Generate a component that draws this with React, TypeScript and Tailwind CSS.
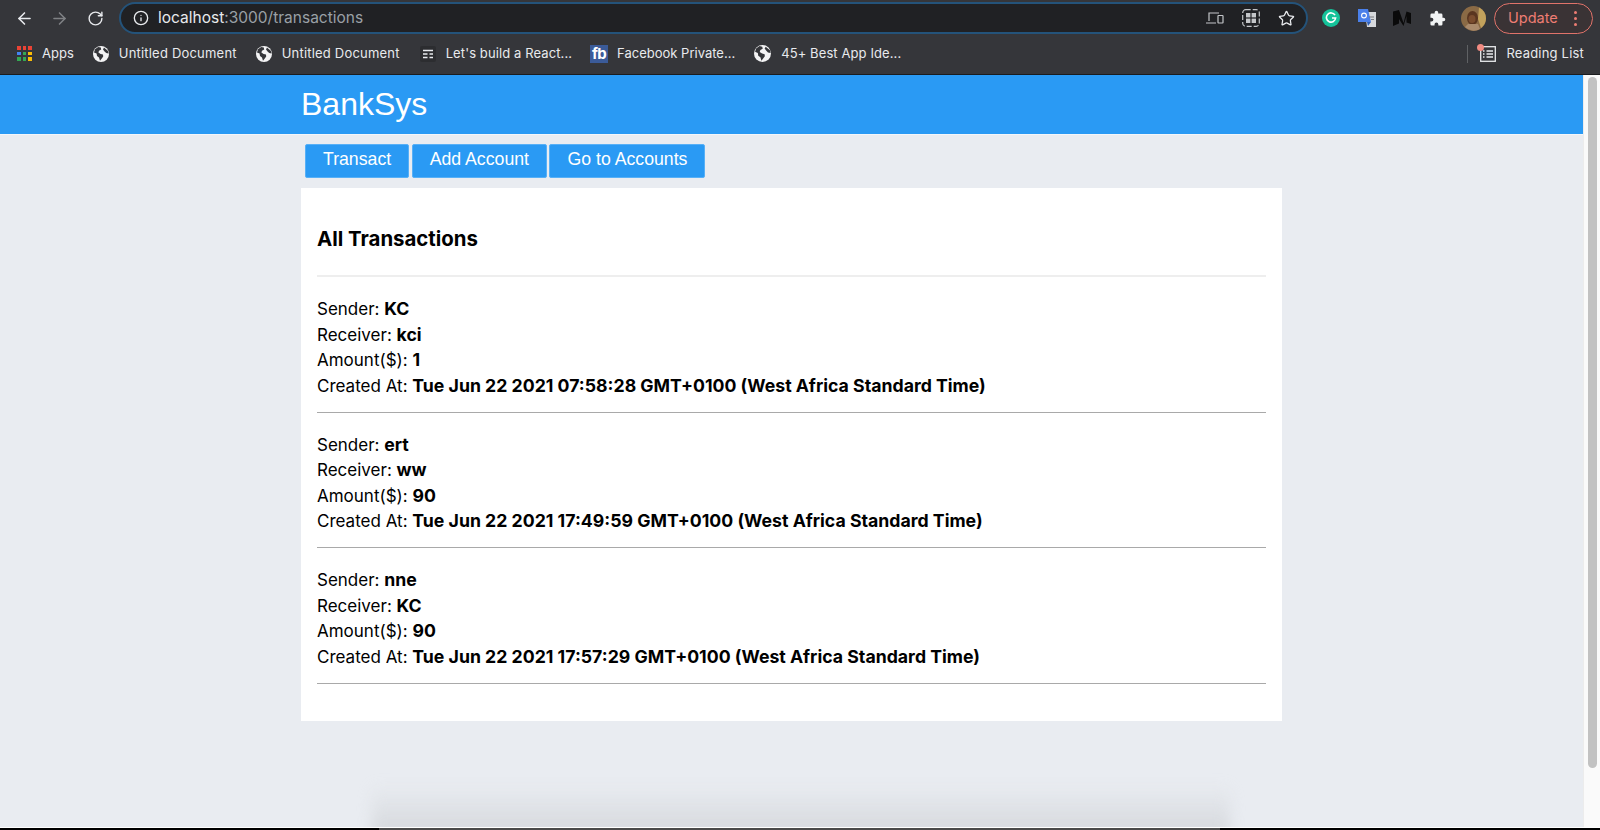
import { ArrowLeft, ArrowRight, Info, RotateCw, Star } from "lucide-react";

const transactions = [
	{ sender: "KC", receiver: "kci", amount: "1", createdAt: "Tue Jun 22 2021 07:58:28 GMT+0100 (West Africa Standard Time)" },
	{ sender: "ert", receiver: "ww", amount: "90", createdAt: "Tue Jun 22 2021 17:49:59 GMT+0100 (West Africa Standard Time)" },
	{ sender: "nne", receiver: "KC", amount: "90", createdAt: "Tue Jun 22 2021 17:57:29 GMT+0100 (West Africa Standard Time)" },
];

function GlobeIcon({ className }: { className: string }) {
	return (
		<svg viewBox="0 0 16 16" className={className}>
			<circle cx="8" cy="8" r="8" fill="#f4f4f5" />
			<path d="M2 3.2 5.2 1l2.6.6.4 2-2.2 1.2-.6 1.8 2.2 1.4 2.4.6.2 2-1.6 2.2-1.6 2-1-3.2-2-1.6-.4-2.4L1 6.4Z" fill="#35363a" />
			<path d="M11 1.6 15 5l.6 2.6-2.4-.6-1.6-1.6L10 3.4Z" fill="#35363a" />
		</svg>
	);
}

function AppsIcon() {
	const colors = ["#ea4335", "#ea4335", "#ea4335", "#4285f4", "#34a853", "#fbbc05", "#34a853", "#34a853", "#fbbc05"];
	return (
		<div className="grid h-[15px] w-[15px] grid-cols-3 gap-[2px]">
			{colors.map((c, i) => (
				<span key={i} className="block" style={{ backgroundColor: c }} />
			))}
		</div>
	);
}

function Bookmark({ icon, label, className, labelClassName }: { icon: React.ReactNode; label: string; className: string; labelClassName: string }) {
	return (
		<div className={`flex items-center ${className}`}>
			{icon}
			<span className={`whitespace-nowrap text-[13px] text-[#e8eaed] ${labelClassName}`}>{label}</span>
		</div>
	);
}

function BrowserChrome() {
	return (
		<div className="h-[75px] shrink-0 border-b border-[#1b1c1e] bg-[#35363a] font-['Inter',sans-serif]">
			{/* Toolbar */}
			<div className="flex h-[36px] items-center">
				<ArrowLeft className="ml-[15px] h-[19px] w-[19px] text-[#e8eaed]" strokeWidth={2} />
				<ArrowRight className="ml-[16px] h-[19px] w-[19px] text-[#7f8184]" strokeWidth={2} />
				<RotateCw className="ml-[18px] h-[17px] w-[17px] text-[#e8eaed]" strokeWidth={2} />
				<div className="ml-[15px] flex h-[32px] w-[1189px] items-center rounded-full border-2 border-[#24537a] bg-[#202124]">
					<Info className="ml-[12px] h-[16px] w-[16px] text-[#e8eaed]" strokeWidth={2} />
					<span className="ml-[9px] text-[15.500px] text-[#e8eaed]">
						localhost<span className="text-[#9aa0a6]">:3000/transactions</span>
					</span>
					<div className="ml-auto flex items-center">
						<svg viewBox="0 0 18 14" className="h-[14px] w-[18px]" fill="none" stroke="#c4c6c9" strokeWidth="1.2">
							<path d="M3 10V2h10M0 12h10" />
							<rect x="12" y="4.5" width="5" height="7.5" rx=".5" />
						</svg>
						<svg viewBox="0 0 18 18" className="ml-[18px] h-[18px] w-[18px]">
							<rect x=".7" y=".7" width="16.6" height="16.6" rx="3" fill="none" stroke="#c4c6c9" strokeWidth="1.2" strokeDasharray="5 2" />
							<rect x="4" y="4" width="4.4" height="4.4" fill="#c4c6c9" />
							<rect x="9.6" y="4" width="4.4" height="4.4" fill="#c4c6c9" />
							<rect x="4" y="9.6" width="4.4" height="4.4" fill="#c4c6c9" />
							<rect x="9.6" y="9.6" width="4.4" height="4.4" fill="#c4c6c9" />
						</svg>
						<Star className="mr-[11px] ml-[18px] h-[17px] w-[17px] text-[#e8eaed]" strokeWidth={1.8} />
					</div>
				</div>
				{/* Extensions */}
				<div className="ml-[14px] flex h-[18px] w-[18px] items-center justify-center rounded-full bg-[#15c39a]">
					<svg viewBox="0 0 12 12" className="h-[12px] w-[12px]" fill="none" stroke="#fff" strokeWidth="1.6">
						<path d="M10 3.2A4.6 4.6 0 1 0 10.6 6H7" />
					</svg>
				</div>
				<svg viewBox="0 0 18 18" className="ml-[18px] h-[18px] w-[18px]">
					<path d="M7 3h11v15H9Z" fill="#d7d9dc" />
					<path d="M0 0h10l3 13H0Z" fill="#4a80ea" />
					<path d="M9 13h4l-3 4Z" fill="#2f5fb5" />
					<circle cx="6" cy="6.5" r="2.4" fill="none" stroke="#fff" strokeWidth="1.1" />
					<path d="M11 8h5M13 10.5h3" stroke="#7b7d80" strokeWidth="1.2" />
				</svg>
				<svg viewBox="0 0 18 16" className="ml-[17px] h-[16px] w-[18px]" fill="#0a0a0a">
					<path d="M0 1.5 6 0v13.5L0 16Z" />
					<path d="M6 0l4.5 13 3-11.5 4.5 1.5V14l-4.500-1.500V6L10.500 16 6 9Z" />
				</svg>
				<svg viewBox="0 0 24 24" className="ml-[18px] h-[17px] w-[17px]" fill="#f1f3f4">
					<path d="M20.500 11H19V7a2 2 0 0 0-2-2h-4V3.500a2.500 2.500 0 0 0-5 0V5H4a2 2 0 0 0-2 2v3.800h1.500a2.700 2.700 0 0 1 0 5.400H2V20a2 2 0 0 0 2 2h3.800v-1.500a2.700 2.700 0 0 1 5.400 0V22H17a2 2 0 0 0 2-2v-4h1.500a2.500 2.500 0 0 0 0-5Z" />
				</svg>
				<svg viewBox="0 0 25 25" className="ml-[15px] h-[25px] w-[25px]">
					<circle cx="12.500" cy="12.500" r="12.500" fill="#8a6a45" />
					<path d="M18 1.500A12.500 12.500 0 0 1 25 12.500 12.500 12.500 0 0 1 20 22l-3-9Z" fill="#c2a25c" />
					<ellipse cx="11.500" cy="12" rx="5.500" ry="7" fill="#5a3620" />
					<ellipse cx="11" cy="13" rx="3.500" ry="4" fill="#7a4d2f" />
					<path d="M4 21a12.500 12.500 0 0 0 15 2l-2-5H7Z" fill="#a98a6c" />
				</svg>
				<div className="ml-[8px] flex h-[31px] w-[99px] items-center rounded-full border border-[#e0736a] bg-[#3a3335]">
					<span className="ml-[13px] text-[14.5px] text-[#ee7d73]">Update</span>
					<span className="ml-[16px] flex flex-col gap-[3px]">
						<span className="h-[3px] w-[3px] rounded-full bg-[#ee7d73]" />
						<span className="h-[3px] w-[3px] rounded-full bg-[#ee7d73]" />
						<span className="h-[3px] w-[3px] rounded-full bg-[#ee7d73]" />
					</span>
				</div>
			</div>

			{/* Bookmarks bar */}
			<div className="flex h-[38px] items-center pb-[3px]">
				<div className="ml-[17px] flex items-center">
					<AppsIcon />
					<span className="ml-[10px] text-[13px] text-[#e8eaed]">Apps</span>
				</div>
				<Bookmark className="ml-[19px]" labelClassName="ml-[10px] tracking-[0.2px]" icon={<GlobeIcon className="h-[16px] w-[16px]" />} label="Untitled Document" />
				<Bookmark className="ml-[19px]" labelClassName="ml-[10px] tracking-[0.2px]" icon={<GlobeIcon className="h-[16px] w-[16px]" />} label="Untitled Document" />
				<Bookmark
					className="ml-[20px]"
					labelClassName="ml-[10px] tracking-[0.1px]"
					icon={
						<span className="flex h-[16px] w-[16px] items-center justify-center rounded-[2px] bg-[#2c2d30]">
							<svg viewBox="0 0 16 16" className="h-[16px] w-[16px]" stroke="#e8eaed" strokeWidth="1.500">
								<path d="M3 4.500h10M3 8h4.500M9.500 8H13M3 11.500h4.500M9.500 11.500H13" />
							</svg>
						</span>
					}
					label="Let's build a React..."
				/>
				<Bookmark
					className="ml-[18px]"
					labelClassName="ml-[9px]"
					icon={
						<div className="flex h-[18px] w-[18px] items-center justify-center bg-[#3b5b99] text-[15px] leading-none font-bold tracking-[-0.5px] text-white">
							fb
						</div>
					}
					label="Facebook Private..."
				/>
				<Bookmark className="ml-[19px]" labelClassName="ml-[10px] tracking-[0.1px]" icon={<GlobeIcon className="h-[17px] w-[17px]" />} label="45+ Best App Ide..." />
				<div className="ml-auto flex items-center">
					<div className="h-[18px] w-px bg-[#5f6164]" />
					<div className="relative ml-[12px]">
						<svg viewBox="0 0 16 16" className="h-[16px] w-[16px]" fill="none" stroke="#e8eaed" strokeWidth="1.300">
							<rect x=".7" y=".7" width="14.600" height="14.600" />
							<path d="M3 5h1.500M6.500 5H13M3 8h1.500M6.500 8H13M3 11h1.500M6.500 11H13" />
						</svg>
						<span className="absolute -top-[2px] -left-[3px] h-[7px] w-[7px] rounded-full bg-[#f28b82]" />
					</div>
					<span className="mr-[16px] ml-[10px] text-[13px] tracking-[0.2px] text-[#e8eaed]">Reading List</span>
				</div>
			</div>
		</div>
	);
}

function TransactionRow({ label, value }: { label: string; value: string }) {
	return (
		<div>
			{label}: <b className="text-[17.700px] leading-none font-bold">{value}</b>
		</div>
	);
}

export default function App() {
	const buttons = ["Transact", "Add Account", "Go to Accounts"];

	return (
		<div className="relative flex h-[830px] w-[1600px] flex-col overflow-hidden bg-[#e9ecf1]">
			<BrowserChrome />

			<div className="flex min-h-0 flex-1">
				<main className="min-w-0 flex-1">
					<header className="h-[60px] border-b border-[#f3f6fa] bg-[#2a9af4]">
						<div className="mx-auto w-[981px] font-['Liberation_Sans',sans-serif] text-[32px] leading-[58px] text-white">BankSys</div>
					</header>

					<div className="mx-auto w-[981px]">
						<nav className="flex gap-[2.500px] pt-[9px] pl-[4px] font-['Liberation_Sans',sans-serif]">
							{buttons.map((b) => (
								<button key={b} className="h-[34px] rounded-[2px] border border-[#57b0f7] bg-[#2a9af4] px-[17px] pb-[3px] text-[17.700px] text-white">
									{b}
								</button>
							))}
						</nav>

						<section className="mt-[10px] h-[533px] bg-white px-4 font-['Inter',sans-serif] text-black">
							<h2 className="border-b-2 border-[#eeeeee] pt-[38px] pb-[23px] text-[20.400px] leading-[26px] font-bold">All Transactions</h2>
							<div className="text-[17px] leading-[25.500px]">
								{transactions.map((t) => (
									<div key={t.createdAt} className="border-b border-[#a9a9a9] pt-[20px] pb-[12.500px]">
										<TransactionRow label="Sender" value={t.sender} />
										<TransactionRow label="Receiver" value={t.receiver} />
										<TransactionRow label="Amount($)" value={t.amount} />
										<TransactionRow label="Created At" value={t.createdAt} />
									</div>
								))}
							</div>
						</section>
					</div>
				</main>

				{/* Scrollbar */}
				<div className="w-[17px] border-l border-[#ececec] bg-[#fafafa] pt-[2px] pl-[4px]">
					<div className="h-[691px] w-[9px] rounded-full bg-[#c2c2c2]" />
				</div>
			</div>

			{/* Window shadow from the screenshot's bottom edge */}
			<div className="absolute right-[370px] bottom-[-6px] left-[372px] h-[52px] bg-gradient-to-b from-transparent to-[#d4d7db] blur-[7px]" />
			<div className="absolute right-0 bottom-0 left-0 h-[3px] border-t border-white bg-black">
				<div className="mx-auto h-full w-[841px] -translate-x-[1px] bg-[#4a4a4a]" />
			</div>
		</div>
	);
}
